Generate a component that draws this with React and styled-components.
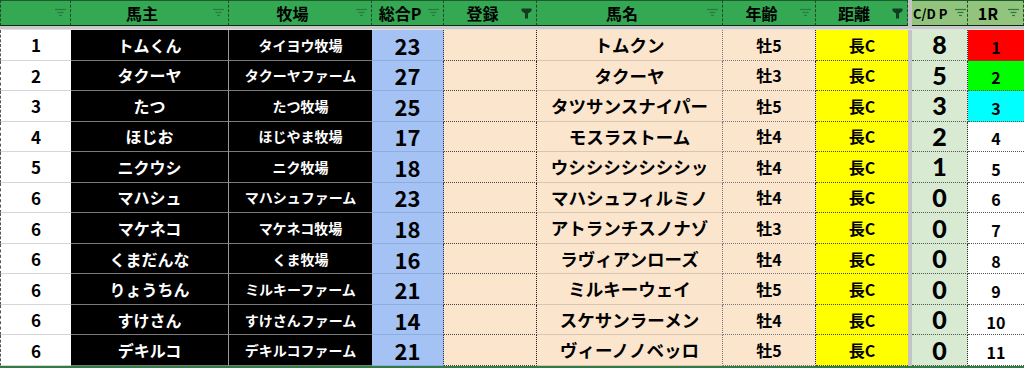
import React from "react";
import styled, { createGlobalStyle, css } from "styled-components";

const Global = createGlobalStyle`
    html, body {
        margin: 0;
        padding: 0;
        background: #ffffff;
    }
    * {
        box-sizing: border-box;
    }
`;

const Sheet = styled.div`
    display: grid;
    grid-template-columns: 71px 158px 143px 72px 93px 186px 93px 92px 4px 56px 56px;
    grid-template-rows: 26px 4px repeat(11, 1fr);
    width: 1024px;
    height: 368px;
    border-bottom: 2px solid #2f7d44;
    font-family: "Noto Sans CJK JP", "Noto Sans", sans-serif;
    color: #000;
`;

const Head = styled.div`
    display: flex;
    align-items: center;
    background: ${(p) => (p.light ? "#93c47d" : "#34a853")};
    border-top: 1px solid #1d5b2d;
    border-bottom: 1px solid #0c2a14;
    border-right: 1px dashed #1b4a26;
    font-weight: 700;
    font-size: ${(p) => (p.small ? "13px" : "16px")};
    line-height: 1;
    padding: ${(p) => (p.small ? "0 1px 0 1px" : "0 4px 0 0")};
    ${(p) =>
        p.first &&
        css`
            border-left: 1px dashed #1b4a26;
        `}
`;

const HeadText = styled.span`
    flex: 1;
    text-align: ${(p) => (p.left ? "left" : "center")};
    white-space: nowrap;
`;

const Band = styled.div`
    grid-column: 1 / -1;
    background: #c9c9c9;
    border-bottom: 1px solid #e2e2e2;
`;

const Sep = styled.div`
    background: #c4c4c4;
`;

const looks = {
    rank: css`
        background: #fff;
        font-size: 17px;
        border-bottom: 1px solid #d6d6d6;
        border-left: 1px dashed #555;
    `,
    owner: css`
        background: #000;
        color: #fff;
        font-size: 16px;
        border-bottom: 1px solid #7a7a7a;
        border-right: 1px solid #9a9a9a;
    `,
    farm: css`
        background: #000;
        color: #fff;
        font-size: 14px;
        border-bottom: 1px solid #7a7a7a;
    `,
    total: css`
        background: #a4c2f4;
        font-size: 22px;
        border-bottom: 1px solid #8eaee0;
        border-right: 1px dotted #333;
    `,
    reg: css`
        background: #fce5cd;
        border-bottom: 1px dotted #444;
        border-right: 1px dotted #222;
    `,
    name: css`
        background: #fce5cd;
        font-size: 17.5px;
        font-weight: 600;
        border-bottom: 1px solid #d8c6b4;
        border-right: 1px dotted #777;
    `,
    age: css`
        background: #fce5cd;
        font-size: 16px;
        border-bottom: 1px dotted #777;
        border-right: 1px dotted #222;
    `,
    dist: css`
        background: #ffff00;
        font-size: 16px;
        border-bottom: 1px dotted #444;
    `,
    cdp: css`
        background: #d9ead3;
        font-family: Lato, "Noto Sans", sans-serif;
        font-size: 25px;
        font-weight: 900;
        border-bottom: 1px dotted #555;
        border-right: 1px dotted #333;
    `,
    race: css`
        font-size: 16px;
        padding-top: 4px;
        border-bottom: 1px dotted #555;
    `,
};

const Cell = styled.div`
    display: flex;
    align-items: center;
    justify-content: center;
    font-weight: 700;
    line-height: 1;
    white-space: nowrap;
    ${(p) => looks[p.kind]}
    ${(p) =>
        p.bg &&
        css`
            background: ${p.bg};
        `}
`;

const FilterLines = () => (
    <svg width="11" height="10" viewBox="0 0 11 10">
        <g stroke="#2a7a40" strokeWidth="1.2">
            <line x1="0" y1="1.5" x2="11" y2="1.5" />
            <line x1="2.5" y1="4.5" x2="8.5" y2="4.5" />
            <line x1="4" y1="7.5" x2="7" y2="7.5" />
        </g>
    </svg>
);

const FilterSolid = () => (
    <svg width="11" height="11" viewBox="0 0 11 11">
        <path d="M0.5 0.5 H10.5 V3 L7 5.5 V10.5 H4 V5.5 L0.5 3 Z" fill="#143d20" />
    </svg>
);

const heads = [
    { label: "" },
    { label: "馬主" },
    { label: "牧場" },
    { label: "総合P" },
    { label: "登録", solid: true },
    { label: "馬名" },
    { label: "年齢" },
    { label: "距離", solid: true },
];

const rows = [
    ["1", "トムくん", "タイヨウ牧場", 23, "トムクン", "牡5", 8, 1, "#ff0000"],
    ["2", "タクーヤ", "タクーヤファーム", 27, "タクーヤ", "牡3", 5, 2, "#00ff00"],
    ["3", "たつ", "たつ牧場", 25, "タツサンスナイパー", "牡5", 3, 3, "#00ffff"],
    ["4", "ほじお", "ほじやま牧場", 17, "モスラストーム", "牡4", 2, 4],
    ["5", "ニクウシ", "ニク牧場", 18, "ウシシシシシシシッ", "牡4", 1, 5],
    ["6", "マハシュ", "マハシュファーム", 23, "マハシュフィルミノ", "牡4", 0, 6],
    ["6", "マケネコ", "マケネコ牧場", 18, "アトランチスノナゾ", "牡3", 0, 7],
    ["6", "くまだんな", "くま牧場", 16, "ラヴィアンローズ", "牡4", 0, 8],
    ["6", "りょうちん", "ミルキーファーム", 21, "ミルキーウェイ", "牡5", 0, 9],
    ["6", "すけさん", "すけさんファーム", 14, "スケサンラーメン", "牡4", 0, 10],
    ["6", "デキルコ", "デキルコファーム", 21, "ヴィーノノベッロ", "牡5", 0, 11],
];

export default function App() {
    return (
        <>
            <Global />
            <Sheet>
                {heads.map((h, i) => (
                    <Head key={i} first={i === 0}>
                        <HeadText>{h.label}</HeadText>
                        {h.solid ? <FilterSolid /> : <FilterLines />}
                    </Head>
                ))}
                <Sep />
                <Head light small>
                    <HeadText left>C/D P</HeadText>
                    <FilterLines />
                </Head>
                <Head light>
                    <HeadText>1R</HeadText>
                    <FilterLines />
                </Head>
                <Band />
                {rows.map(([rank, owner, farm, total, horse, age, cdp, race, color], i) => (
                    <React.Fragment key={i}>
                        <Cell kind="rank">{rank}</Cell>
                        <Cell kind="owner">{owner}</Cell>
                        <Cell kind="farm">{farm}</Cell>
                        <Cell kind="total">{total}</Cell>
                        <Cell kind="reg" />
                        <Cell kind="name">{horse}</Cell>
                        <Cell kind="age">{age}</Cell>
                        <Cell kind="dist">長C</Cell>
                        <Sep />
                        <Cell kind="cdp">{cdp}</Cell>
                        <Cell kind="race" bg={color || "#ffffff"}>
                            {race}
                        </Cell>
                    </React.Fragment>
                ))}
            </Sheet>
        </>
    );
}
